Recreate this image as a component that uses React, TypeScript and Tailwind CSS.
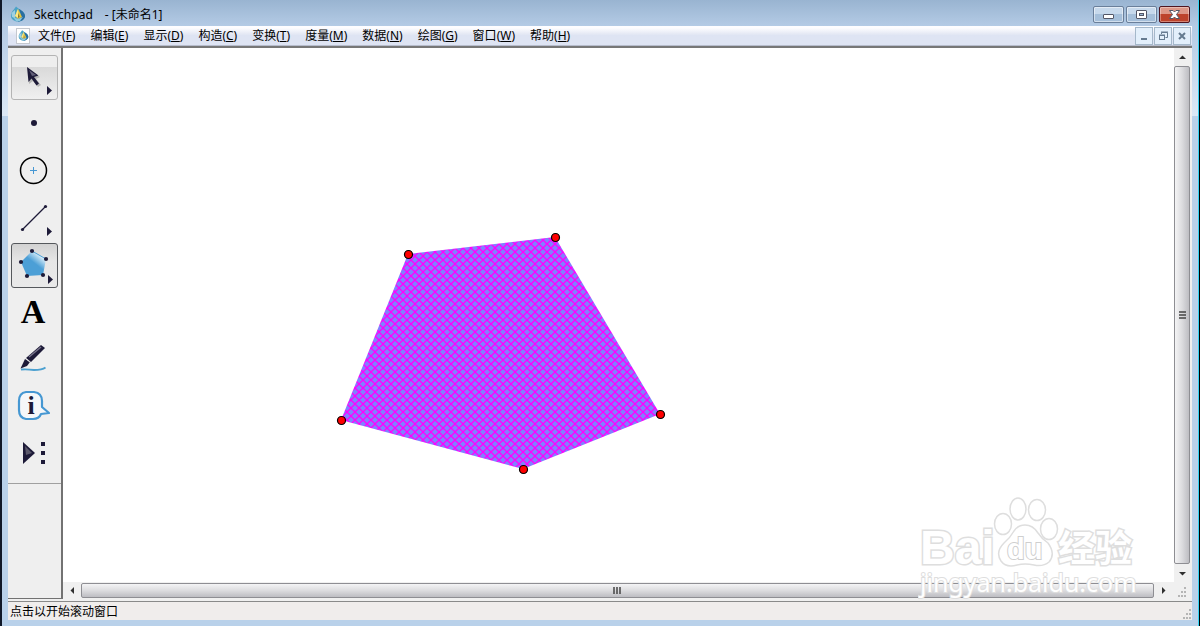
import React, { useState } from 'react';

const menus = [
  { label: '文件', key: 'F' },
  { label: '编辑', key: 'E' },
  { label: '显示', key: 'D' },
  { label: '构造', key: 'C' },
  { label: '变换', key: 'T' },
  { label: '度量', key: 'M' },
  { label: '数据', key: 'N' },
  { label: '绘图', key: 'G' },
  { label: '窗口', key: 'W' },
  { label: '帮助', key: 'H' },
];

const vertices = [
  [345, 206],
  [492, 189],
  [597, 366],
  [460, 421],
  [278, 372],
];

function Drop({ className }: { className: string }) {
  return (
    <svg className={className} viewBox="0 0 16 16" aria-hidden="true">
      <path d="M6 0.500 C3 5 0.500 6.500 1 10.500 C1.500 14 5 15.500 8 15.500 C12 15.500 15 13 15 9.500 C15 6 10 4 6 0.500Z" fill="#4aa3c7" />
      <path d="M9 3 C13 5 15.500 8 15 11 C14 14 11 15.500 8 15.500 L11 9Z" fill="#2a6fa0" />
      <path d="M1.500 7 L5 4 L5 12 L2 11Z" fill="#9fd0e2" />
      <path d="M8 3 L12 11 L8 13 L5 10Z" fill="#e8c33a" />
      <path d="M8 3 L8.500 12 L5 10Z" fill="#fbe98a" />
      <path d="M8.500 7 L9.500 11 L8 12Z" fill="#6b6430" />
      <path d="M3 11 L8 13 L13 11 L10 15 L6 15Z" fill="#8fc9dd" />
    </svg>
  );
}

const Flyout = () => <path d="M35 30 L40 34.500 L35 39Z" fill="#1d1a38" />;

const tools = [
  {
    name: '移动箭头工具',
    icon: (
      <>
        <path d="M16 13 L17 28 L21 25 L26 31 L29 29 L24 23 L28 21Z" fill="#000" opacity="0.2" />
        <path d="M15 11 L16.500 26 L19.500 22.500 L24.500 29.500 L27 27.500 L22 21 L26.500 19.500Z" fill="#1d1a38" />
        <path d="M17 14 L24 19 L20 20Z" fill="#625f78" />
        <Flyout />
      </>
    ),
  },
  { name: '点工具', icon: <circle cx="22" cy="20" r="3" fill="#1d1a38" /> },
  {
    name: '圆工具',
    icon: (
      <>
        <circle cx="21.500" cy="20.500" r="13" fill="none" stroke="#000" strokeWidth="1.500" />
        <path d="M21.500 17 V24 M18 20.500 H25" stroke="#4697d3" fill="none" />
      </>
    ),
  },
  {
    name: '线段工具',
    icon: (
      <>
        <path d="M10.500 32.500 L33.500 9.500" stroke="#1d1a38" strokeWidth="1.300" />
        <circle cx="10.500" cy="32.500" r="1.600" fill="#1d1a38" />
        <circle cx="33.500" cy="9.500" r="1.600" fill="#1d1a38" />
        <Flyout />
      </>
    ),
  },
  {
    name: '多边形工具',
    icon: (
      <>
        <defs>
          <linearGradient id="penta" x1="0.850" y1="0.150" x2="0.500" y2="0.600">
            <stop offset="0" stopColor="#fff" />
            <stop offset="0.3" stopColor="#b4d9f0" />
            <stop offset="0.8" stopColor="#4c9fd6" />
          </linearGradient>
        </defs>
        <path d="M20 7 L34 15 L31 31 L15 32 L9 18Z" fill="url(#penta)" />
        <path d="M20 7 L34 15" stroke="#4c9fd6" />
        {[[20, 7], [34, 15], [31, 31], [15, 32], [9, 18]].map(([x, y]) => (
          <circle key={x} cx={x} cy={y} r="2.100" fill="#1d1a38" />
        ))}
        <path d="M36 31 L41 35.500 L36 40Z" fill="#1d1a38" />
      </>
    ),
  },
  {
    name: '文本工具',
    icon: (
      <text x="21" y="32" textAnchor="middle" className="font-['Liberation_Serif',serif] text-[34px] font-bold" fill="#000">
        A
      </text>
    ),
  },
  {
    name: '标记工具',
    icon: (
      <>
        <path d="M9 31.500 Q15 31 22 32 Q30 32 33.500 29.500" fill="none" stroke="#4ca0d0" strokeWidth="1.800" />
        <path d="M8.500 30.500 L13 21 L18 24 L15 28Z" fill="#1d1a38" />
        <path d="M14 20 L29 7 L33 10 L19 24Z" fill="#1d1a38" />
        <path d="M17 19 L29 9" stroke="#77748b" strokeWidth="1.500" />
        <path d="M13.500 20.500 L18.500 24.500" stroke="#ddd" />
      </>
    ),
  },
  {
    name: '信息工具',
    icon: (
      <>
        <path
          d="M14 7 H22 Q30 8 30 16 V22 L37 28 L29 29 Q27 34 21 34 H14 Q7 33 7 25 V16 Q7 8 14 7Z"
          fill="#f5f7f9"
          stroke="#4597d2"
          strokeWidth="2.200"
          strokeLinejoin="round"
        />
        <text x="19" y="29" textAnchor="middle" className="font-['Liberation_Serif',serif] text-[26px] font-bold" fill="#1d1a38">
          i
        </text>
      </>
    ),
  },
  {
    name: '自定义工具',
    icon: (
      <>
        <path d="M11 10 L23 21 L11 32Z" fill="#1d1a38" />
        <path d="M13 14 L20 21 L14 23Z" fill="#5b586b" />
        <path d="M29 10h4v4h-4Z M29 19h4v4h-4Z M29 28h4v4h-4Z" fill="#1d1a38" />
      </>
    ),
  },
];

const frameButton =
  'flex h-[17px] w-[31px] items-center justify-center rounded-xs border border-[#6a7f9a] bg-linear-to-b from-[#c7d9ec] from-50% to-[#a5bfda] to-50% shadow-[inset_0_0_0_1px_rgba(255,255,255,0.5)]';
const childButton = 'flex size-[18px] items-center justify-center border border-[#a5b8ca] bg-[#e3effb] text-[#667b90]';

function TitleBar() {
  return (
    <header className="flex h-[26px] items-start pr-2 pl-2">
      <Drop className="mt-[6px] size-4" />
      <h1 className="mt-[6px] ml-2 flex gap-3 text-xs leading-[18px] whitespace-pre">
        <span>Sketchpad</span>
        <span>- [未命名1]</span>
      </h1>
      <div className="mt-[6px] ml-auto flex gap-[2px]">
        <button aria-label="最小化" className={frameButton}>
          <svg className="h-[13px] w-[17px]" viewBox="0 0 17 13"><rect x="3.500" y="6.500" width="10" height="4" rx="0.500" fill="#fff" stroke="#535666" /></svg>
        </button>
        <button aria-label="最大化" className={frameButton}>
          <svg className="h-[13px] w-[17px]" viewBox="0 0 17 13">
            <rect x="3.500" y="2.500" width="10" height="8" rx="0.500" fill="#fff" stroke="#535666" />
            <rect x="6.500" y="5.500" width="4" height="2" fill="#9bb7d5" stroke="#535666" />
          </svg>
        </button>
        <button
          aria-label="关闭"
          className="flex h-[17px] w-[31px] items-center justify-center rounded-xs border border-[#4f1520] bg-linear-to-b from-[#dd9788] from-50% to-[#bd432c] to-50% shadow-[inset_0_0_0_1px_rgba(255,255,255,0.35)]"
        >
          <svg className="h-[13px] w-[17px]" viewBox="0 0 17 13">
            <path d="M3.500 2.500 h3.500 l1.500 1.500 l1.500 -1.500 h3.500 l-3 4 l3 4 h-3.500 l-1.500 -1.500 l-1.500 1.500 h-3.500 l3 -4Z" fill="#fff" stroke="#535666" />
          </svg>
        </button>
      </div>
    </header>
  );
}

function MenuBar() {
  return (
    <div className="flex h-5 items-center border-b border-[#b6bccc] bg-linear-to-b from-[#fdfdff] from-10% via-[#e6eaf5] via-40% to-[#dee4f3] to-50% pr-px">
      <span className="ml-2 flex h-4 w-[14px] items-center justify-center border border-[#c4c8cf] bg-white">
        <Drop className="size-[11px]" />
      </span>
      <nav className="ml-2 flex gap-[15px]">
        {menus.map((m) => (
          <button key={m.key} className="leading-5 whitespace-nowrap">
            {m.label}(<span className="underline underline-offset-1">{m.key}</span>)
          </button>
        ))}
      </nav>
      <div className="ml-auto flex gap-px">
        <button aria-label="最小化子窗口" className={childButton}>
          <svg className="size-3" viewBox="0 0 12 12"><path d="M3 8h6v2h-6Z" fill="currentColor" /></svg>
        </button>
        <button aria-label="还原子窗口" className={childButton}>
          <svg className="size-3" viewBox="0 0 12 12" fill="none" stroke="currentColor">
            <path d="M4.500 4 V2.500 H10.500 V7.500 H8.500 M4 2 H11 M2 5 H8" />
            <rect x="2.500" y="5.500" width="5" height="4" />
          </svg>
        </button>
        <button aria-label="关闭子窗口" className={childButton}>
          <svg className="size-3" viewBox="0 0 12 12"><path d="M3 3 L9 9 M9 3 L3 9" stroke="currentColor" strokeWidth="2" /></svg>
        </button>
      </div>
    </div>
  );
}

function Toolbox() {
  const [active, setActive] = useState(4);

  const look = (i: number) => {
    if (i === active) return 'border-[#55585c] bg-linear-to-b from-[#d2d2d2] via-[#e6e6e6] via-40% to-[#e9e9e9]';
    if (i === 0) return 'border-[#b4b4b4] bg-linear-to-b from-[#eeeeee] from-25% via-[#d9d9d9] via-25% to-[#f0f0f0]';
    return 'border-transparent';
  };

  return (
    <aside className="w-[55px] shrink-0 border-r-2 border-b border-[#727272] bg-[#efefef]">
      <div className="flex flex-col gap-[2px] border-b border-[#a0a0a0] pt-[7px] pb-[7px] pl-[3px]">
        {tools.map((t, i) => (
          <button
            key={t.name}
            aria-label={t.name}
            aria-pressed={i === active}
            onClick={() => setActive(i)}
            className={`h-[45px] w-[47px] rounded-[3px] border ${look(i)}`}
          >
            <svg className="h-[43px] w-[45px]" viewBox="0 0 45 43">{t.icon}</svg>
          </button>
        ))}
      </div>
    </aside>
  );
}

function Sketch() {
  return (
    <svg className="block size-full" role="img" aria-label="五边形">
      <defs>
        <pattern id="hatch" width="8" height="8" patternUnits="userSpaceOnUse">
          <rect width="8" height="8" fill="#8080ff" />
          <path d="M-1 -1 L9 9 M-1 9 L9 -1" stroke="#ff00ff" strokeWidth="1.300" />
        </pattern>
      </defs>
      <polygon points={vertices.map((v) => v.join(',')).join(' ')} fill="url(#hatch)" />
      {vertices.map(([x, y]) => (
        <circle key={x} cx={x + 0.5} cy={y + 0.5} r="4" fill="#ff0000" stroke="#000" strokeWidth="1.200" />
      ))}
    </svg>
  );
}

function Arrow({ label, d }: { label: string; d: string }) {
  return (
    <button aria-label={label} className="flex size-[18px] shrink-0 items-center justify-center self-center">
      <svg className="size-[9px]" viewBox="0 0 9 9"><path d={d} fill="#303030" /></svg>
    </button>
  );
}

function Grip() {
  return (
    <svg className="size-3" viewBox="0 0 12 12" fill="#b5b5b5" aria-hidden="true">
      <path d="M9 1h2v2h-2Z M6 5h2v2h-2Z M9 5h2v2h-2Z M3 9h2v2h-2Z M6 9h2v2h-2Z M9 9h2v2h-2Z" />
    </svg>
  );
}

function Watermark() {
  return (
    <svg className="pointer-events-none absolute right-12 bottom-0 h-[106px] w-[224px]" viewBox="0 0 224 106" aria-hidden="true">
      <g fill="#fff" stroke="#dedede" strokeWidth="1.500">
        <text x="2" y="71" strokeWidth="3" paintOrder="stroke" className="font-['Liberation_Sans',sans-serif] text-[48px] font-bold">
          Bai
        </text>
        <ellipse cx="85" cy="31" rx="8.500" ry="10.500" />
        <ellipse cx="100" cy="16" rx="8" ry="11" />
        <ellipse cx="119" cy="17" rx="8.500" ry="10.500" />
        <ellipse cx="131" cy="36" rx="8.500" ry="10.500" />
        <path d="M107 32 Q115 32 120 40 Q124 46 130 50 Q138 61 131 69 Q125 74 116 72 Q107 70 99 72 Q88 75 83 68 Q77 59 86 50 Q92 45 96 38 Q100 32 107 32Z" />
        <text x="89" y="66" paintOrder="stroke" strokeWidth="2" stroke="#cfcfcf" className="font-['Liberation_Sans',sans-serif] text-[29px] font-bold">
          du
        </text>
        <text x="140" y="69" paintOrder="stroke" strokeWidth="3" className="font-['Noto_Sans_CJK_SC',sans-serif] text-[37px] font-bold">
          经验
        </text>
        <text x="2" y="99" paintOrder="stroke" strokeWidth="2" className="font-['Noto_Sans',sans-serif] text-[25px]">
          jingyan.baidu.com
        </text>
      </g>
    </svg>
  );
}

function Document() {
  return (
    <div className="relative flex min-h-0 min-w-0 flex-1 flex-col">
      <div className="flex min-h-0 flex-1">
        <main className="min-w-0 flex-1 overflow-hidden bg-white">
          <Sketch />
        </main>
        <div className="flex w-4 shrink-0 flex-col bg-[#f0f0f0]">
          <Arrow label="向上滚动" d="M1 6 L4.500 2.500 L8 6Z" />
          <div className="flex flex-1 items-center justify-center rounded-xs border border-[#8e8e93] bg-linear-to-r from-[#f4f4f5] via-[#dcdcdf] via-50% to-[#bdbdc2]">
            <svg className="h-[9px] w-[7px]" viewBox="0 0 7 9"><path d="M0 1h7 M0 4h7 M0 7h7" stroke="#444" strokeWidth="1.500" /></svg>
          </div>
          <Arrow label="向下滚动" d="M1 3 L4.500 6.500 L8 3Z" />
        </div>
      </div>
      <div className="flex h-[17px] shrink-0 bg-[#f0f0f0]">
        <Arrow label="向左滚动" d="M6 1 L2.500 4.500 L6 8Z" />
        <div className="my-px flex flex-1 items-center justify-center rounded-xs border border-[#8e8e93] bg-linear-to-b from-[#f4f4f5] via-[#dcdcdf] via-50% to-[#bdbdc2]">
          <svg className="h-[7px] w-[9px]" viewBox="0 0 9 7"><path d="M1 0v7 M4 0v7 M7 0v7" stroke="#444" strokeWidth="1.500" /></svg>
        </div>
        <Arrow label="向右滚动" d="M3 1 L6.500 4.500 L3 8Z" />
        <div className="flex w-[18px] items-end justify-center pb-px">
          <Grip />
        </div>
      </div>
      <Watermark />
    </div>
  );
}

export default function App() {
  return (
    <div className="flex h-screen flex-col border-r border-l-2 border-r-black border-l-[#101828] bg-[#b9d1ea] font-['Noto_Sans','Noto_Sans_CJK_SC',sans-serif] text-xs text-black">
      <div className="flex min-h-0 flex-1 flex-col border-r border-[#35d4f5] bg-[linear-gradient(to_bottom,#99b4d1_0px,#b4cbe5_26px,#dbe8f6_116px,#b9d1ea_116px)] pb-[6px]">
        <TitleBar />
        <div className="mr-[6px] ml-[6px] flex min-h-0 flex-1 flex-col bg-[#f0f0f0]">
          <MenuBar />
          <div className="flex min-h-0 flex-1 border-t-2 border-[#777777] pr-[2px] pb-[2px]">
            <Toolbox />
            <Document />
          </div>
          <footer className="flex h-[19px] shrink-0 items-center justify-between border-t border-[#8a8a8a] bg-[#f0edec] pl-[2px]">
            <span className="pt-[2px] leading-4">点击以开始滚动窗口</span>
            <span className="self-end">
              <Grip />
            </span>
          </footer>
        </div>
      </div>
    </div>
  );
}
